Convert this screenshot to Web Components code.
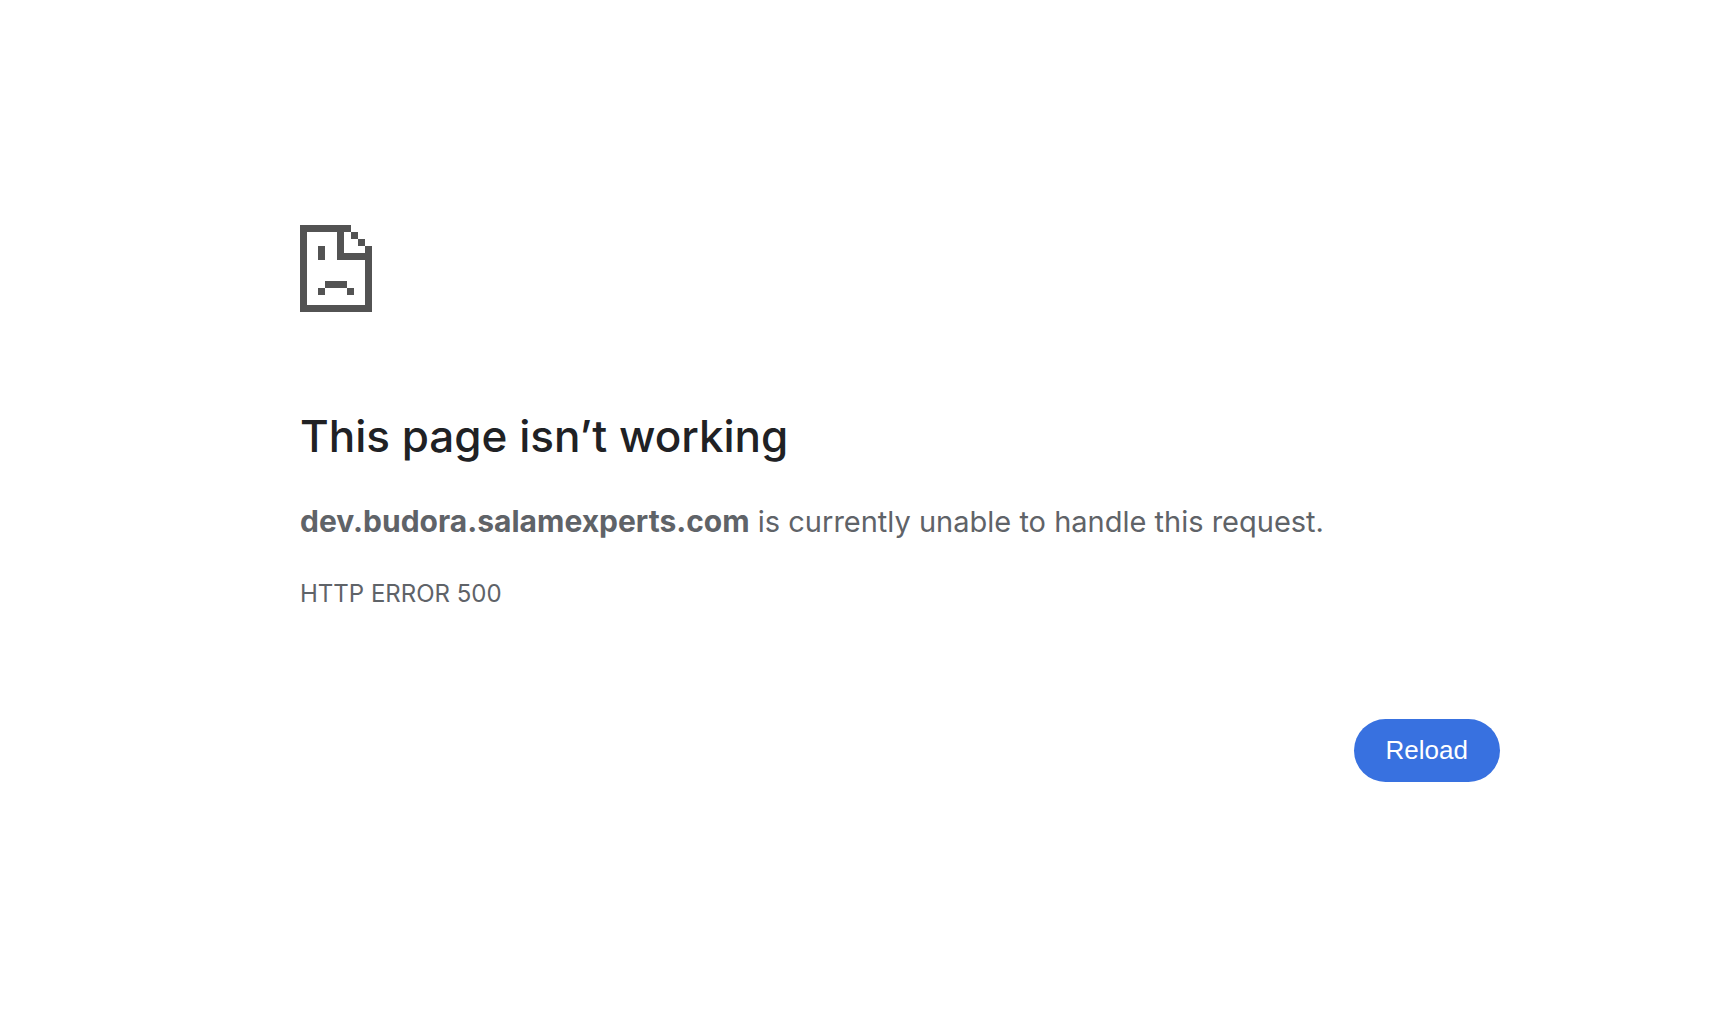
<!DOCTYPE html>
<html lang="en">
<head>
<meta charset="utf-8">
<title>dev.budora.salamexperts.com</title>
<style>
body { margin: 0; background: #fff; color: #5f6368; font-family: Inter, "Liberation Sans", sans-serif; }
strong { font-size: 30px; }
</style>
</head>
<body>
<error-page>
  <sad-page-icon slot="icon"></sad-page-icon>
  <error-message heading="This page isn’t working" code="HTTP ERROR 500"><strong>dev.budora.salamexperts.com</strong> is currently unable to handle this request.</error-message>
  <reload-button slot="actions">Reload</reload-button>
</error-page>
<script>
function define(name, html, setup) {
  customElements.define(name, class extends HTMLElement {
    constructor() {
      super();
      this.attachShadow({ mode: "open" }).innerHTML = html;
    }
    connectedCallback() { if (setup) setup(this); }
  });
}

define("sad-page-icon", `
<style>
:host { display: block; }
svg { display: block; width: 72px; height: 87px; }
</style>
<svg viewBox="0 0 72 87" fill="#535353" shape-rendering="crispEdges" aria-hidden="true">
  <path d="M0 0H51V7H44V28H72V87H0ZM7 7V80H65V35H37V7Z" fill-rule="evenodd"/>
  <path d="M51 7h7v7h-7zM58 14h7v7h-7zM65 21h7v7h-7zM18 21h7v14h-7zM25 56h22v7H25zM18 63h7v7h-7zM47 63h7v7h-7z"/>
</svg>`);

define("error-message", `
<style>
:host { display: block; }
h1 { margin: 0 0 31px; color: #202124; font-size: 44px; line-height: 60px; font-weight: 500; }
p { margin: 0; font-size: 29px; line-height: 48px; }
.code { margin-top: 24px; font-size: 24px; line-height: 48px; }
</style>
<h1></h1>
<p><slot></slot></p>
<p class="code"></p>`, el => {
  el.shadowRoot.querySelector("h1").textContent = el.getAttribute("heading");
  el.shadowRoot.querySelector(".code").textContent = el.getAttribute("code");
});

define("reload-button", `
<style>
:host { display: block; }
button { border: 0; border-radius: 32px; padding: 16px 32px; background: #3871e0; color: #fff; font: 26px/31px "Liberation Sans", Arial, sans-serif; cursor: pointer; }
</style>
<button type="button"><slot></slot></button>`);

define("error-page", `
<style>
:host { display: block; }
main { max-width: 1200px; margin: 0 216px 0 300px; padding-top: 225px; }
.message { margin-top: 94px; }
.actions { display: flex; justify-content: flex-end; margin-top: 101px; }
@media (max-width: 1200px) { main { margin: 0 24px; } }
</style>
<main>
  <slot name="icon"></slot>
  <div class="message"><slot></slot></div>
  <div class="actions"><slot name="actions"></slot></div>
</main>`);
</script>
</body>
</html>
